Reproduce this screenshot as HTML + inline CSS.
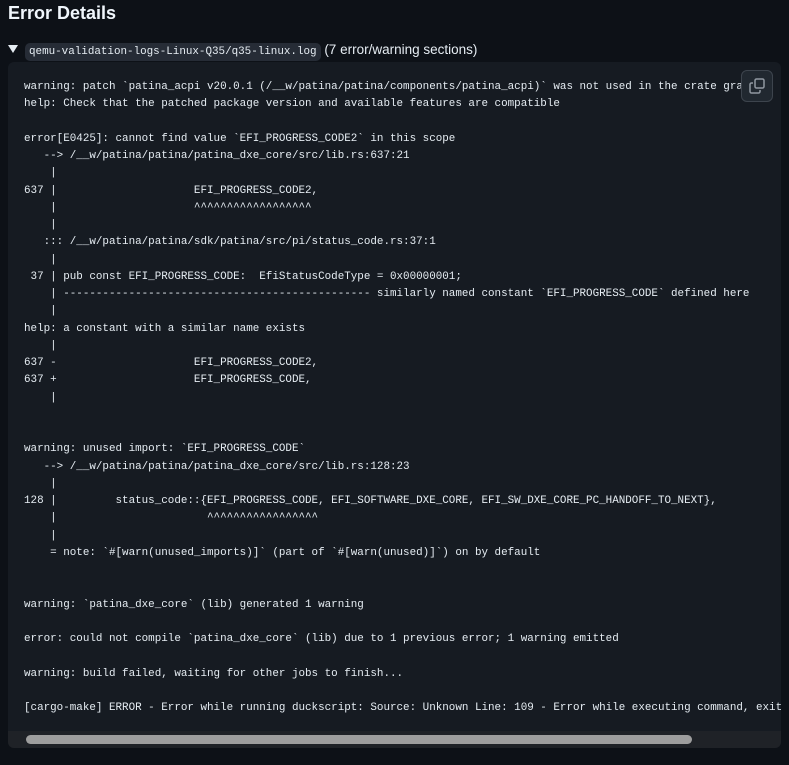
<!DOCTYPE html>
<html><head><meta charset="utf-8"><style>
html,body{margin:0;padding:0;background:#0d1117;width:789px;height:765px;overflow:hidden;font-family:"Liberation Sans",sans-serif;color:#e6edf3}
h2{position:absolute;left:8px;top:3px;margin:0;font-size:18px;font-weight:bold;color:#f0f6fc}
.sum{position:absolute;left:8px;top:42px;font-size:13.5px;white-space:nowrap}
.tri{display:inline-block;width:0;height:0;border-left:5px solid transparent;border-right:5px solid transparent;border-top:8px solid #e6edf3;margin-right:7px;vertical-align:1px}
.chip{font-family:"Liberation Mono",monospace;font-size:10.9px;background:#262c36;border-radius:5px;padding:3px 4px}
.blk{position:absolute;left:8px;top:62px;width:773px;height:686px;background:#161b22;border-radius:6px;overflow:hidden}
pre{margin:0;position:absolute;left:16px;top:17px;font-family:"Liberation Mono",monospace;font-size:10.9px;line-height:17.25px;color:#e6edf3;white-space:pre}
.copy{position:absolute;left:733px;top:8px;width:32px;height:32px;border:1px solid #3d444d;border-radius:6px;background:#212830;box-sizing:border-box}
.sb{position:absolute;left:0;top:669px;width:773px;height:17px;background:#1f2227}
.th{position:absolute;left:18px;top:4px;width:666px;height:9px;background:#9e9e9e;border-radius:5px}
</style></head><body>
<h2>Error Details</h2>
<div class="sum"><span class="tri"></span><span class="chip">qemu-validation-logs-Linux-Q35/q35-linux.log</span> (7 error/warning sections)</div>
<div class="blk">
<pre>warning: patch `patina_acpi v20.0.1 (/__w/patina/patina/components/patina_acpi)` was not used in the crate graph
help: Check that the patched package version and available features are compatible

error[E0425]: cannot find value `EFI_PROGRESS_CODE2` in this scope
   --> /__w/patina/patina/patina_dxe_core/src/lib.rs:637:21
    |
637 |                     EFI_PROGRESS_CODE2,
    |                     ^^^^^^^^^^^^^^^^^^
    |
   ::: /__w/patina/patina/sdk/patina/src/pi/status_code.rs:37:1
    |
 37 | pub const EFI_PROGRESS_CODE:  EfiStatusCodeType = 0x00000001;
    | ----------------------------------------------- similarly named constant `EFI_PROGRESS_CODE` defined here
    |
help: a constant with a similar name exists
    |
637 -                     EFI_PROGRESS_CODE2,
637 +                     EFI_PROGRESS_CODE,
    |


warning: unused import: `EFI_PROGRESS_CODE`
   --> /__w/patina/patina/patina_dxe_core/src/lib.rs:128:23
    |
128 |         status_code::{EFI_PROGRESS_CODE, EFI_SOFTWARE_DXE_CORE, EFI_SW_DXE_CORE_PC_HANDOFF_TO_NEXT},
    |                       ^^^^^^^^^^^^^^^^^
    |
    = note: `#[warn(unused_imports)]` (part of `#[warn(unused)]`) on by default


warning: `patina_dxe_core` (lib) generated 1 warning

error: could not compile `patina_dxe_core` (lib) due to 1 previous error; 1 warning emitted

warning: build failed, waiting for other jobs to finish...

[cargo-make] ERROR - Error while running duckscript: Source: Unknown Line: 109 - Error while executing command, exit code: 101</pre>
<div class="copy"><svg width="30" height="30" viewBox="0 0 30 30"><rect x="13" y="8" width="9" height="9" rx="1.5" fill="none" stroke="#9198a1" stroke-width="1.5"/><path d="M11 12H9.5A1.5 1.5 0 0 0 8 13.5v7A1.5 1.5 0 0 0 9.5 22h7a1.5 1.5 0 0 0 1.5-1.5V19" fill="none" stroke="#9198a1" stroke-width="1.5"/></svg></div>
<div class="sb"><div class="th"></div></div>
</div>
</body></html>
